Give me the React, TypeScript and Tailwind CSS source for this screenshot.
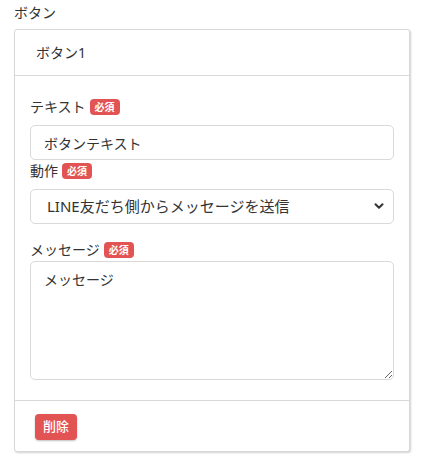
import { ChevronDown } from 'lucide-react'

function Required() {
  return (
    <span className="ml-1 inline-flex h-4 items-center rounded-[4px] bg-[#e25454] px-[5px] text-[10px] font-bold leading-none text-white">
      必須
    </span>
  )
}

export default function App() {
  return (
    <div
      className="min-h-[463px] bg-white px-[14px] pt-[3px] text-[#333]"
      style={{ fontFamily: '"Noto Sans", "Noto Sans CJK JP", sans-serif' }}
    >
      <p className="text-[14px] leading-[20px]">ボタン</p>
      <div className="mt-[6px] w-[396px] rounded-[3px] border border-[#d6d8dc] bg-white shadow-[1px_1px_2px_rgba(0,0,0,0.18)]">
        <div className="flex h-[46px] items-center border-b border-[#d6d8dc] pl-[21px] text-[14px]">
          ボタン1
        </div>
        <div className="px-[15px] pt-[20px] pb-[20px]">
          <label className="flex items-center text-[14px] leading-[22px]">
            テキスト
            <Required />
          </label>
          <input
            readOnly
            value="ボタンテキスト"
            className="mt-[7px] h-[35px] w-full rounded-[5px] border border-[#d9d9d9] px-[13px] text-[14px] text-[#333] outline-none"
          />
          <label className="flex items-center text-[14px] leading-[22px]">
            動作
            <Required />
          </label>
          <div className="relative mt-[7px]">
            <select className="h-[35px] w-full appearance-none rounded-[5px] border border-[#d9d9d9] bg-white pl-[16px] text-[15px] text-[#333] outline-none">
              <option>LINE友だち側からメッセージを送信</option>
            </select>
            <ChevronDown
              className="pointer-events-none absolute right-[8px] top-[10px] h-[14px] w-[14px] text-[#333]"
              strokeWidth={3.5}
            />
          </div>
          <label className="mt-[15px] flex items-center text-[14px] leading-[22px]">
            メッセージ
            <Required />
          </label>
          <textarea
            readOnly
            value="メッセージ"
            className="block h-[119px] w-full rounded-[5px] border border-[#d9d9d9] px-[13px] py-[7px] text-[14px] text-[#333] outline-none"
          />
        </div>
        <div className="border-t border-[#d6d8dc] px-[20px] pt-[12px] pb-[11px]">
          <button className="h-[26px] rounded-[4px] bg-[#e25454] px-[8px] text-[13px] font-medium text-white shadow-[0_1px_2px_rgba(0,0,0,0.25)]">
            削除
          </button>
        </div>
      </div>
    </div>
  )
}
